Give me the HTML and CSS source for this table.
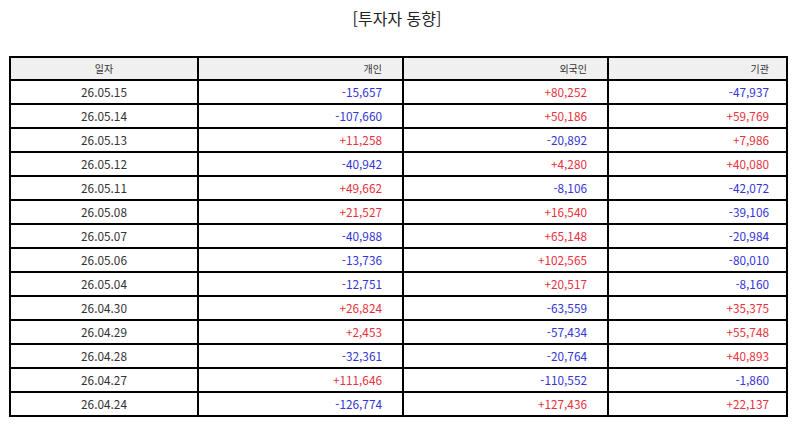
FILE: index.html
```html
<!DOCTYPE html>
<html lang="ko">
<head>
<meta charset="utf-8">
<link rel="stylesheet" href="styles.css">
</head>
<body>
<h1 class="title">[투자자 동향]</h1>
<table class="grid">
  <colgroup>
    <col class="c-date">
    <col class="c-num">
    <col class="c-num">
    <col class="c-last">
  </colgroup>
  <thead>
    <tr><th class="center">일자</th><th class="pr">개인</th><th class="pr">외국인</th><th class="pr-last">기관</th></tr>
  </thead>
  <tbody>
    <tr><td class="center">26.05.15</td><td class="pr neg">-15,657</td><td class="pr pos">+80,252</td><td class="pr-last neg">-47,937</td></tr>
    <tr><td class="center">26.05.14</td><td class="pr neg">-107,660</td><td class="pr pos">+50,186</td><td class="pr-last pos">+59,769</td></tr>
    <tr><td class="center">26.05.13</td><td class="pr pos">+11,258</td><td class="pr neg">-20,892</td><td class="pr-last pos">+7,986</td></tr>
    <tr><td class="center">26.05.12</td><td class="pr neg">-40,942</td><td class="pr pos">+4,280</td><td class="pr-last pos">+40,080</td></tr>
    <tr><td class="center">26.05.11</td><td class="pr pos">+49,662</td><td class="pr neg">-8,106</td><td class="pr-last neg">-42,072</td></tr>
    <tr><td class="center">26.05.08</td><td class="pr pos">+21,527</td><td class="pr pos">+16,540</td><td class="pr-last neg">-39,106</td></tr>
    <tr><td class="center">26.05.07</td><td class="pr neg">-40,988</td><td class="pr pos">+65,148</td><td class="pr-last neg">-20,984</td></tr>
    <tr><td class="center">26.05.06</td><td class="pr neg">-13,736</td><td class="pr pos">+102,565</td><td class="pr-last neg">-80,010</td></tr>
    <tr><td class="center">26.05.04</td><td class="pr neg">-12,751</td><td class="pr pos">+20,517</td><td class="pr-last neg">-8,160</td></tr>
    <tr><td class="center">26.04.30</td><td class="pr pos">+26,824</td><td class="pr neg">-63,559</td><td class="pr-last pos">+35,375</td></tr>
    <tr><td class="center">26.04.29</td><td class="pr pos">+2,453</td><td class="pr neg">-57,434</td><td class="pr-last pos">+55,748</td></tr>
    <tr><td class="center">26.04.28</td><td class="pr neg">-32,361</td><td class="pr neg">-20,764</td><td class="pr-last pos">+40,893</td></tr>
    <tr><td class="center">26.04.27</td><td class="pr pos">+111,646</td><td class="pr neg">-110,552</td><td class="pr-last neg">-1,860</td></tr>
    <tr><td class="center">26.04.24</td><td class="pr neg">-126,774</td><td class="pr pos">+127,436</td><td class="pr-last pos">+22,137</td></tr>
  </tbody>
</table>
</body>
</html>
```

FILE: styles.css
```css
html, body {
  margin: 0;
  padding: 0;
  background: #ffffff;
}
body {
  width: 794px;
  height: 425px;
  font-family: "Noto Sans CJK KR", "Noto Sans", sans-serif;
  color: #333333;
}
.title {
  margin: 0;
  padding-top: 6px;
  height: 24px;
  line-height: 24px;
  text-align: center;
  font-size: 16px;
  font-weight: normal;
  color: #222222;
}
.grid {
  margin-top: 26px;
  margin-left: 9px;
  width: 777px;
  table-layout: fixed;
  border-collapse: collapse;
}
.c-date { width: 188px; }
.c-num { width: 205px; }
.c-last { width: 179px; }
.grid th,
.grid td {
  border: 2px solid #000000;
  height: 22px;
  padding: 0;
  line-height: 20px;
  font-weight: normal;
}
.grid th {
  height: 21px;
  background: #f0f0f0;
  font-size: 10px;
  color: #333333;
}
.grid td {
  font-size: 11.8px;
}
.center { text-align: center; }
.pr { text-align: right; padding-right: 20px !important; }
.pr-last { text-align: right; padding-right: 17px !important; }
.pos { color: #e8313c; }
.neg { color: #3434d6; }
```
